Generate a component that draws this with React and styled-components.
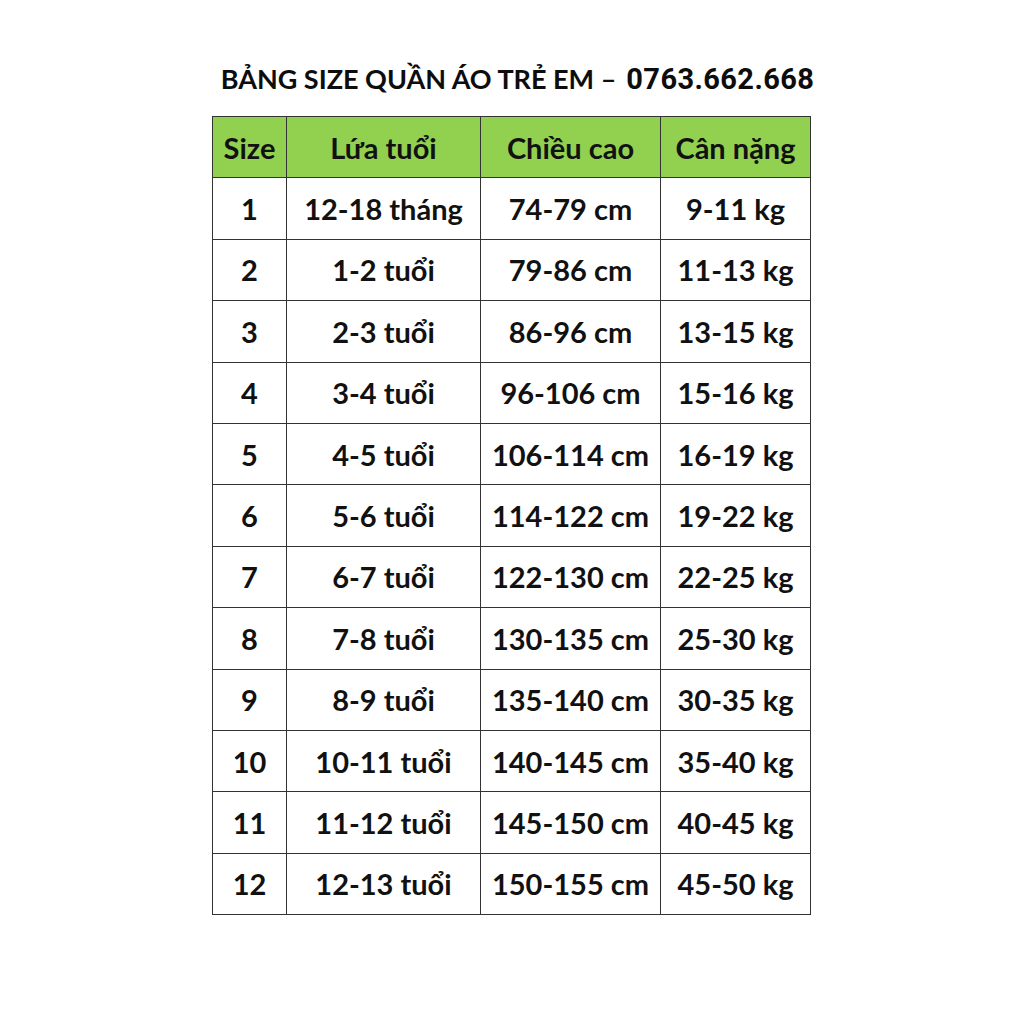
import React from 'react'
import styled, { createGlobalStyle } from "styled-components";

const GlobalStyle = createGlobalStyle`
  body {
    margin: 0;
    background: #ffffff;
    font-family: "Lato", "Liberation Sans", sans-serif;
    color: #111;
  }
`

const Page = styled.div`
  width: 1023px;
  height: 1023px;
  display: flex;
  flex-direction: column;
  align-items: center;
  padding-top: 61px;
  box-sizing: border-box;
`

const Title = styled.h1`
  margin: 0 0 19px 12px;
  font-size: 27px;
  font-weight: 700;
  line-height: 36px;
  white-space: nowrap;
  color: #0d0d0d;
`

const Phone = styled.span`
  font-family: "Roboto", "Liberation Sans", sans-serif;
  font-size: 29px;
  font-weight: 700;
  letter-spacing: 0.4px;
  margin-left: 10px;
`

const Table = styled.table`
  border-collapse: collapse;
  table-layout: fixed;
  width: 598px;
`

const Cell = styled.td`
  border: 1px solid #333;
  height: 60.4px;
  padding: 0;
  text-align: center;
  font-size: 29px;
  font-weight: 700;
  color: #111;
  background: ${(props) => (props.head ? "#92d050" : "#fff")};
  white-space: nowrap;
`

const cols = [74, 194, 180, 150]

const rows = [
  ["1", "12-18 tháng", "74-79 cm", "9-11 kg"],
  ["2", "1-2 tuổi", "79-86 cm", "11-13 kg"],
  ["3", "2-3 tuổi", "86-96 cm", "13-15 kg"],
  ["4", "3-4 tuổi", "96-106 cm", "15-16 kg"],
  ["5", "4-5 tuổi", "106-114 cm", "16-19 kg"],
  ["6", "5-6 tuổi", "114-122 cm", "19-22 kg"],
  ["7", "6-7 tuổi", "122-130 cm", "22-25 kg"],
  ["8", "7-8 tuổi", "130-135 cm", "25-30 kg"],
  ["9", "8-9 tuổi", "135-140 cm", "30-35 kg"],
  ["10", "10-11 tuổi", "140-145 cm", "35-40 kg"],
  ["11", "11-12 tuổi", "145-150 cm", "40-45 kg"],
  ["12", "12-13 tuổi", "150-155 cm", "45-50 kg"],
]

const header = ["Size", "Lứa tuổi", "Chiều cao", "Cân nặng"]

function App() {
  return (
    <>
      <GlobalStyle />
      <Page>
        <Title>
          BẢNG SIZE QUẦN ÁO TRẺ EM –<Phone>0763.662.668</Phone>
        </Title>
        <Table>
          <colgroup>
            {cols.map((w, i) => <col key={i} style={{ width: w }} />)}
          </colgroup>
          <thead>
            <tr>
              {header.map((h) => <Cell as="th" head key={h}>{h}</Cell>)}
            </tr>
          </thead>
          <tbody>
            {rows.map((r) => (
              <tr key={r[0]}>
                {r.map((c, i) => <Cell key={i}>{c}</Cell>)}
              </tr>
            ))}
          </tbody>
        </Table>
      </Page>
    </>
  )
}

export default App
